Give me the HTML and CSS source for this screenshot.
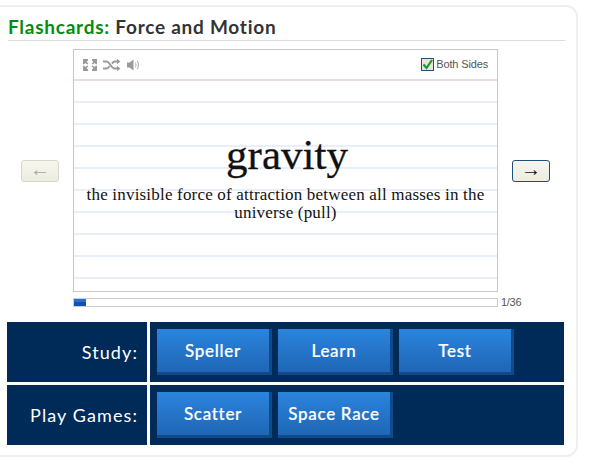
FILE: index.html
```html
<!DOCTYPE html>
<html lang="en">
<head>
<meta charset="utf-8">
<title>Flashcards: Force and Motion</title>
<link rel="stylesheet" href="styles.css">
</head>
<body>
<div class="panel">
  <h1 class="title"><span class="title-green">Flashcards:</span> Force and Motion</h1>
  <div class="viewer">
    <button class="nav nav-off">&#8592;</button>
    <div class="stage">
      <div class="card">
        <div class="toolbar">
          <svg class="icon" width="16" height="14" viewBox="0 0 16 14" fill="#9a9a9a">
            <path d="M1 1h5v1.6L4.6 4 6.4 5.6 5.2 6.6 3.4 5 2.2 6.2H1zM15 1v5.2h-1.2L12.6 5l-1.8 1.600-1.200-1L11.400 4 10 2.600V1zM1 13V7.800h1.200L3.400 9l1.800-1.600 1.200 1L4.600 10 6 11.400V13zM15 13h-5v-1.600l1.400-1.400-1.800-1.600 1.200-1L12.600 9l1.200-1.200H15z"/>
          </svg>
          <svg class="icon" width="18" height="14" viewBox="0 0 18 14" fill="none" stroke="#9a9a9a" stroke-width="1.8">
            <path d="M0 3.500h3.500c3 0 5 7 8 7H15M0 10.500h3.500c1.300 0 2.300-1.200 3.200-2.600M9 5.600c.8-1.100 1.600-2.100 2.500-2.100H15"/>
            <path d="M14 .8l3.400 2.700L14 6.200zM14 7.800l3.400 2.700L14 13.200z" fill="#9a9a9a" stroke="none"/>
          </svg>
          <svg class="icon" width="14" height="14" viewBox="0 0 14 14" fill="none" stroke="#a8a8a8" stroke-width="1">
            <path d="M1 4.500h2.500L7.500 1.500v11l-4-3H1z" fill="#9a9a9a" stroke="none"/>
            <path d="M9.300 4.500c.9 1.500.9 3.500 0 5M11.300 2.800c1.500 2.500 1.500 5.900 0 8.400"/>
          </svg>
          <label class="both">
            <svg class="check" width="13" height="13" viewBox="0 0 13 13">
              <rect x=".5" y=".5" width="12" height="12" fill="#e4e4e4" stroke="#1d4f7d"/>
              <path d="M2.500 6.500l3 3.500 5.500-8" fill="none" stroke="#1e9a2a" stroke-width="2.200"/>
            </svg>
            Both Sides
          </label>
        </div>
        <div class="face">
          <div class="term">gravity</div>
          <div class="definition">the invisible force of attraction between all masses in the universe (pull)</div>
        </div>
      </div>
      <div class="progress-row">
        <div class="progress"><div class="progress-fill"></div></div>
        <span class="count">1/36</span>
      </div>
    </div>
    <button class="nav nav-on">&#8594;</button>
  </div>
  <div class="modes">
    <div class="mode-label">Study:</div>
    <div class="mode-buttons">
      <a class="mode-btn">Speller</a>
      <a class="mode-btn">Learn</a>
      <a class="mode-btn">Test</a>
    </div>
    <div class="mode-label">Play Games:</div>
    <div class="mode-buttons">
      <a class="mode-btn">Scatter</a>
      <a class="mode-btn">Space Race</a>
    </div>
  </div>
</div>
</body>
</html>
```
FILE: styles.css
```css
html, body { margin: 0; padding: 0; background: #fff; }
body { width: 590px; height: 465px; overflow: hidden; }
.panel {
  box-sizing: border-box;
  width: 590px;
  height: 452px;
  margin: 5px 0 0 -12px;
  border: 2px solid #efefef;
  border-radius: 12px;
  padding: 9px 13px 0 18px;
}
.title {
  box-sizing: border-box;
  width: 557px;
  height: 25px;
  margin: 0 0 8px;
  font: 700 19px/21px Lato, "Open Sans", sans-serif;
  letter-spacing: .75px;
  color: #333;
  border-bottom: 1px solid #ddd;
}
.title-green { color: #078a10; }
.viewer {
  display: flex;
  align-items: flex-start;
}
.nav {
  flex: none;
  box-sizing: border-box;
  width: 38px;
  height: 22px;
  margin-top: 111px;
  padding: 0 0 4px;
  border-radius: 3px;
  background: linear-gradient(#f6f6f0, #ecece0);
  font: 20px/16px "Liberation Serif", serif;
}
.nav-off { margin-left: 13px; margin-right: 14px; border: 1px solid #d9d9c8; color: #a9a997; }
.nav-on { margin-left: 14px; border: 1px solid #1d4f7d; color: #111; }
.stage { flex: none; width: 425px; }
.card {
  box-sizing: border-box;
  width: 425px;
  height: 243px;
  border: 1px solid #c8c8c8;
  display: flex;
  flex-direction: column;
}
.toolbar {
  box-sizing: border-box;
  flex: none;
  height: 31px;
  display: flex;
  align-items: center;
  gap: 5px;
  padding: 0 9px 0 8px;
  border-bottom: 2px solid #ecdcdf;
}
.icon { display: block; }
.both {
  margin-left: auto;
  display: flex;
  align-items: center;
  gap: 2px;
  font: 11px/13px "Liberation Sans", sans-serif;
  letter-spacing: -.15px;
  color: #555;
}
.check { display: block; }
.face {
  flex: 1;
  box-sizing: border-box;
  padding: 49px 10px 0;
  text-align: center;
  font-family: "Liberation Serif", serif;
  color: #111;
  background: repeating-linear-gradient(#fff 0 20px, #e9eff8 20px 22px);
}
.term {
  font-size: 43px;
  line-height: 50px;
  padding-left: 3px;
  -webkit-text-stroke: .3px #111;
}
.definition {
  font-size: 17px;
  line-height: 18px;
  letter-spacing: .19px;
  margin-top: 6px;
}
.progress-row {
  display: flex;
  align-items: center;
  margin-top: 5px;
  height: 10px;
}
.progress {
  flex: none;
  box-sizing: border-box;
  width: 425px;
  height: 9px;
  border: 1px solid #ccc;
}
.progress-fill { width: 12px; height: 7px; background: linear-gradient(#2a6fd0 50%, #1450b0 50%); }
.count {
  flex: none;
  margin-left: 3px;
  font: 11px/12px "Liberation Sans", sans-serif;
  letter-spacing: -.3px;
  color: #555;
}
.modes {
  display: grid;
  grid-template-columns: 140px 414px;
  grid-auto-rows: 60px;
  gap: 3px;
  margin-top: 15px;
  margin-left: -1px;
  color: #fff;
  font-family: Lato, "Open Sans", sans-serif;
}
.mode-label {
  background: #002a58;
  text-align: right;
  padding-right: 9px;
  font-size: 18px;
  line-height: 60px;
  letter-spacing: 1.1px;
}
.mode-buttons {
  background: #002a58;
  display: flex;
  gap: 6px;
  padding: 7px 0 0 7px;
  box-sizing: border-box;
}
.mode-btn {
  box-sizing: border-box;
  width: 115px;
  height: 46px;
  display: block;
  text-align: center;
  font-size: 17px;
  font-weight: 500;
  line-height: 44px;
  letter-spacing: .7px;
  color: #fff;
  -webkit-text-stroke: .2px #fff;
  background: linear-gradient(#2b84de, #1f66b5);
  border-right: 3px solid #0f4a8a;
  border-bottom: 3px solid #0f4a8a;
}
```
